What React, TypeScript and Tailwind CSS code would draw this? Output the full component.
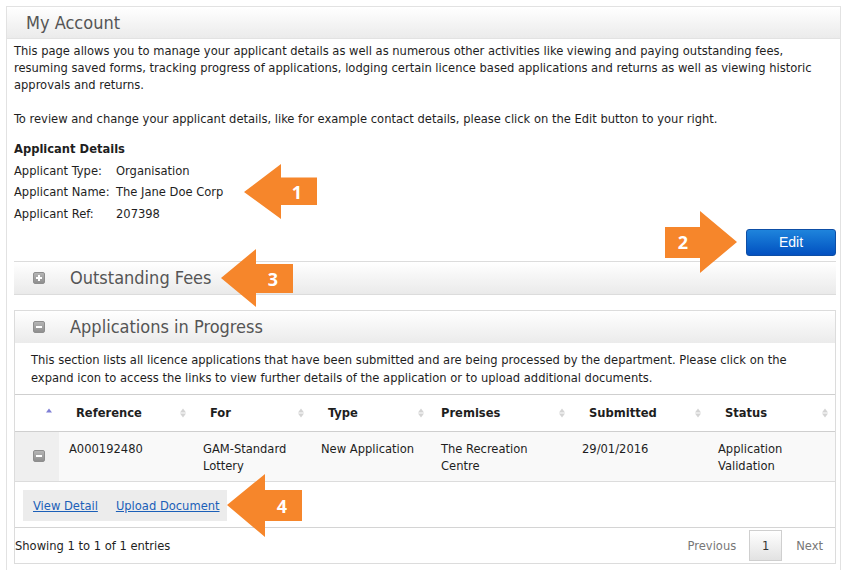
import React from "react";

function SortIcon({ active }: { active?: boolean }) {
  return (
    <span className="absolute right-[7px] top-1/2 -translate-y-1/2 flex flex-col items-center gap-[1px]">
      <span
        className={
          active
            ? "w-0 h-0 border-l-[3px] border-r-[3px] border-b-[4px] border-l-transparent border-r-transparent border-b-[#7f7fd5]"
            : "w-0 h-0 border-l-[3px] border-r-[3px] border-b-[4px] border-l-transparent border-r-transparent border-b-[#d4d4d4]"
        }
      />
      <span
        className={
          active
            ? "w-0 h-0 border-l-[3px] border-r-[3px] border-t-[4px] border-l-transparent border-r-transparent border-t-transparent"
            : "w-0 h-0 border-l-[3px] border-r-[3px] border-t-[4px] border-l-transparent border-r-transparent border-t-[#d4d4d4]"
        }
      />
    </span>
  );
}

function BoxIcon({ plus }: { plus?: boolean }) {
  return (
    <span className="relative inline-block w-[12px] h-[12px] rounded-[2px] border border-[#8e8e8e] bg-gradient-to-b from-[#b5b5b5] to-[#8f8f8f]">
      <span className="absolute left-[2px] top-[4px] w-[6px] h-[2px] bg-white" />
      {plus && <span className="absolute left-[4px] top-[2px] w-[2px] h-[6px] bg-white" />}
    </span>
  );
}

const cols = [
  { label: "", w: "w-[44px]" },
  { label: "Reference", w: "w-[134px]" },
  { label: "For", w: "w-[118px]" },
  { label: "Type", w: "w-[120px]" },
  { label: "Premises", w: "w-[141px]" },
  { label: "Submitted", w: "w-[136px]" },
  { label: "Status", w: "w-[127px]" },
];

export default function App() {
  return (
    <div className="relative w-[846px] h-[570px] overflow-hidden bg-white text-[12.8px] text-[#1e1e1e] font-['DejaVu_Sans_Condensed','DejaVu_Sans',sans-serif] pt-[6px] pl-[6px]">
      <div className="w-[835px] h-[600px] border border-[#e2e2e2]">
        <div className="h-[32px] bg-gradient-to-b from-white to-[#ebebeb] border-b border-[#e2e2e2] pl-[19px] flex items-center text-[18px] text-[#555]">
          My Account
        </div>
        <div className="pl-[7px] pr-[4px] pt-[3px]">
          <p className="leading-[17px]">
            This page allows you to manage your applicant details as well as numerous other activities like viewing and paying outstanding fees, resuming saved forms, tracking progress of applications, lodging certain licence based applications and returns as well as viewing historic approvals and returns.
          </p>
          <p className="leading-[17px] mt-[17px]">
            To review and change your applicant details, like for example contact details, please click on the Edit button to your right.
          </p>
          <div className="mt-[13px] leading-[17px] font-bold">Applicant Details</div>
          <div className="mt-[3px] leading-[21.3px]">
            <div className="flex">
              <span className="w-[102px]">Applicant Type:</span>
              <span>Organisation</span>
            </div>
            <div className="flex">
              <span className="w-[102px]">Applicant Name:</span>
              <span>The Jane Doe Corp</span>
            </div>
            <div className="flex">
              <span className="w-[102px]">Applicant Ref:</span>
              <span>207398</span>
            </div>
          </div>
          <div className="flex justify-end mt-[5px]">
            <button className="w-[90px] h-[27px] rounded-[3px] border border-[#0d4ea6] bg-gradient-to-b from-[#1f84dc] to-[#0550c0] text-white text-[14px] font-['Liberation_Sans',sans-serif]">
              Edit
            </button>
          </div>
          <div className="mt-[5px] h-[34px] border-y border-[#dcdcdc] bg-gradient-to-b from-white to-[#eaeaea] pl-[19px] flex items-center gap-[25px] text-[18px] text-[#555]">
            <BoxIcon plus />
            <span>Outstanding Fees</span>
          </div>
          <div className="mt-[15px] border border-[#dcdcdc]">
            <div className="h-[32px] bg-gradient-to-b from-white to-[#ebebeb] pl-[18px] flex items-center gap-[25px] text-[18px] text-[#555]">
              <BoxIcon />
              <span>Applications in Progress</span>
            </div>
            <p className="px-[16px] pt-[8px] leading-[18px]">
              This section lists all licence applications that have been submitted and are being processed by the department. Please click on the expand icon to access the links to view further details of the application or to upload additional documents.
            </p>
            <div className="mt-[7px] border-t border-[#cfcfcf]">
              <div className="flex h-[37px] border-b border-[#cfcfcf] font-bold">
                {cols.map((c, i) => (
                  <div key={i} className={`relative ${c.w} h-full flex items-center ${i === 4 ? "pl-[10px]" : "pl-[17px]"}`}>
                    {c.label}
                    <SortIcon active={i === 0} />
                  </div>
                ))}
              </div>
              <div className="flex h-[50px] border-b border-[#dcdcdc] bg-[#f9f9f9] leading-[17px]">
                <div className="w-[44px] bg-[#efefef] flex items-center pl-[18px]">
                  <BoxIcon />
                </div>
                <div className="w-[134px] pl-[10px] pt-[8px]">A000192480</div>
                <div className="w-[118px] pl-[10px] pt-[8px]">GAM-Standard<br />Lottery</div>
                <div className="w-[120px] pl-[10px] pt-[8px]">New Application</div>
                <div className="w-[141px] pl-[10px] pt-[8px]">The Recreation<br />Centre</div>
                <div className="w-[136px] pl-[10px] pt-[8px]">29/01/2016</div>
                <div className="w-[127px] pl-[10px] pt-[8px]">Application<br />Validation</div>
              </div>
              <div className="mt-[8px] ml-[8px] w-[204px] h-[31px] bg-[#ececec] pl-[10px] flex items-center gap-[18px] text-[#1b5fb8]">
                <span className="underline">View Detail</span>
                <span className="underline">Upload Document</span>
              </div>
              <div className="mt-[6px] h-[36px] border-t border-[#d4d4d4] flex items-center justify-between">
                <span>Showing 1 to 1 of 1 entries</span>
                <div className="flex items-center pr-[12px] text-[#777]">
                  <span className="mr-[13px]">Previous</span>
                  <span className="w-[33px] h-[31px] border border-[#cfcfcf] bg-gradient-to-b from-white to-[#e2e2e2] text-[#333] flex items-center justify-center">1</span>
                  <span className="ml-[14px]">Next</span>
                </div>
              </div>
            </div>
          </div>
        </div>
      </div>
      <svg className="absolute inset-0 pointer-events-none" width="846" height="570" viewBox="0 0 846 570">
        <g fill="#f6862b">
          <polygon points="244,192 281,164 281,177.5 317,177.5 317,205 281,205 281,219" />
          <polygon points="665,227 700,227 700,211 737,242 700,273 700,258 665,258" />
          <polygon points="221,278 256,249 256,264 293,264 293,293 256,293 256,307" />
          <polygon points="227,505 265,474 265,490 302,490 302,521 265,521 265,537" />
        </g>
        <g fill="white" fontFamily="'Open Sans', sans-serif" fontWeight="700" fontSize="18" textAnchor="middle" dominantBaseline="central">
          <text x="297" y="192">1</text>
          <text x="683" y="242">2</text>
          <text x="273" y="279">3</text>
          <text x="282" y="506">4</text>
        </g>
      </svg>
    </div>
  );
}
